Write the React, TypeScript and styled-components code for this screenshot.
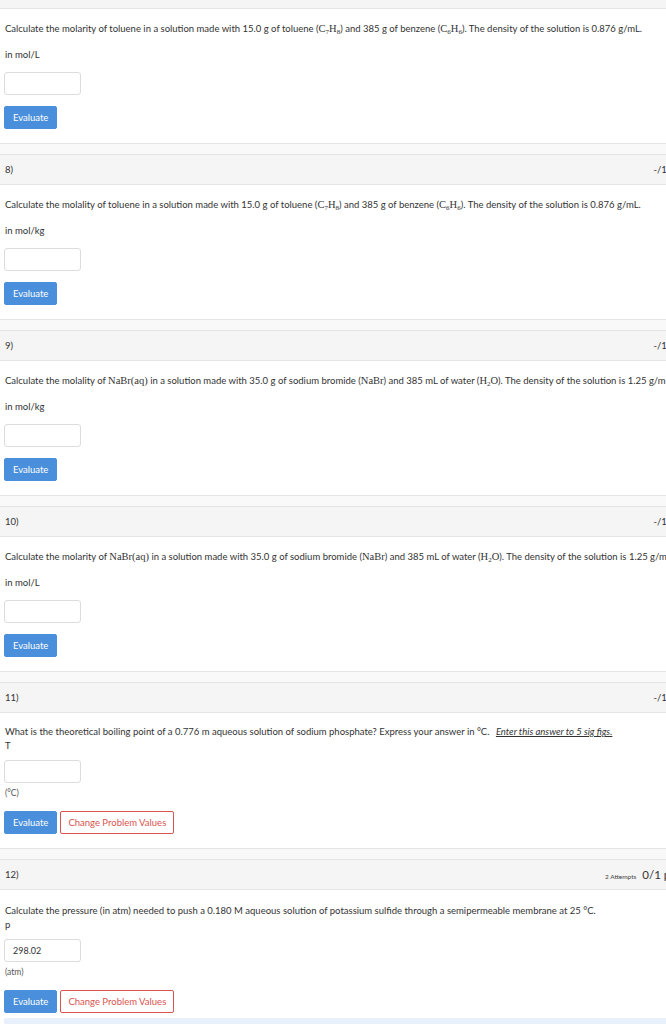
import React from "react";
import styled, { createGlobalStyle } from "styled-components";

const GlobalStyle = createGlobalStyle`
  html, body {
    margin: 0;
    padding: 0;
    background: #ffffff;
    overflow-x: hidden;
  }
  body {
    font-family: Lato, "Open Sans", "Liberation Sans", sans-serif;
    color: #333333;
  }
`;

const Page = styled.div`
  width: 700px;
  background: #f9f9f9;
  display: flex;
  flex-direction: column;
  gap: 10px;
`;

const Card = styled.section<{ $first?: boolean }>`
  background: #ffffff;
  border-top: ${(p) => (p.$first ? "none" : "1px solid #e4e4e4")};
  border-bottom: 1px solid #e4e4e4;
`;

const Stub = styled.div`
  height: 8px;
  background: #f5f5f5;
  border-bottom: 1px solid #e4e4e4;
`;

const Header = styled.header`
  height: 30px;
  box-sizing: border-box;
  background: #f5f5f5;
  border-bottom: 1px solid #e4e4e4;
  display: flex;
  align-items: center;
  justify-content: space-between;
  padding: 0 5px;
  font-size: 9.5px;
  color: #333;
`;

const Points = styled.div`
  display: flex;
  align-items: baseline;
  gap: 6px;
  white-space: nowrap;
`;

const Attempts = styled.span`
  font-size: 6.5px;
  color: #444;
`;

const Score = styled.span`
  font-size: 11.5px;
  color: #333;
`;

const Body = styled.div<{ $top?: number }>`
  padding: ${(p) => p.$top ?? 14}px 4px 14px;
  display: flex;
  flex-direction: column;
  align-items: flex-start;
`;

const Prompt = styled.p<{ $tight?: boolean }>`
  margin: 0 0 ${(p) => (p.$tight ? "2px" : "14px")};
  font-size: 9.5px;
  line-height: 12px;
  white-space: nowrap;
  padding-left: 1px;
`;

const Label = styled.div<{ $tight?: boolean }>`
  font-size: 9.5px;
  line-height: 12px;
  padding-left: 1px;
  margin-bottom: ${(p) => (p.$tight ? "8px" : "11px")};
`;

const Input = styled.div`
  width: 77px;
  height: 23px;
  box-sizing: border-box;
  border: 1px solid #dcdcdc;
  border-radius: 3px;
  background: #fff;
  font-size: 9px;
  display: flex;
  align-items: center;
  padding: 0 8px;
  color: #333;
`;

const Unit = styled.div`
  font-size: 8.5px;
  line-height: 12px;
  color: #555;
  margin-top: 4px;
  padding-left: 1px;
`;

const Buttons = styled.div<{ $gap?: number }>`
  display: flex;
  gap: 3px;
  margin-top: ${(p) => p.$gap ?? 11}px;
`;

const EvalButton = styled.button`
  height: 23px;
  padding: 0 8px;
  border: 1px solid #4a8fdb;
  border-radius: 2px;
  background: #4a8fdb;
  color: #ffffff;
  font-family: inherit;
  font-size: 9.5px;
`;

const ChangeButton = styled.button`
  height: 23px;
  padding: 0 7px;
  border: 1px solid #d9534f;
  border-radius: 2px;
  background: #ffffff;
  color: #d9534f;
  font-family: inherit;
  font-size: 9.5px;
`;

const Alert = styled.div`
  height: 12px;
  margin-top: 5px;
  align-self: stretch;
  background: #e8f1fb;
  border-radius: 2px;
`;

const Chem = styled.span`
  font-family: "Liberation Serif", "DejaVu Serif", serif;
  font-size: 10.5px;
  sub {
    font-size: 7px;
    vertical-align: -2px;
    line-height: 0;
  }
`;

const Hint = styled.span`
  font-style: italic;
  text-decoration: underline;
  margin-left: 4px;
`;

const C7H8 = () => (
  <Chem>
    C<sub>7</sub>H<sub>8</sub>
  </Chem>
);
const C6H6 = () => (
  <Chem>
    C<sub>6</sub>H<sub>6</sub>
  </Chem>
);
const NaBrAq = () => <Chem>NaBr(aq)</Chem>;
const NaBr = () => <Chem>NaBr</Chem>;
const H2O = () => (
  <Chem>
    H<sub>2</sub>O
  </Chem>
);

type Simple = {
  n: number;
  prompt: React.ReactNode;
  label: string;
  stub?: boolean;
};

const simple: Simple[] = [
  {
    n: 7,
    stub: true,
    prompt: (
      <>
        Calculate the molarity of toluene in a solution made with 15.0 g of toluene (<C7H8 />) and 385 g of benzene (
        <C6H6 />
        ). The density of the solution is 0.876 g/mL.
      </>
    ),
    label: "in mol/L",
  },
  {
    n: 8,
    prompt: (
      <>
        Calculate the molality of toluene in a solution made with 15.0 g of toluene (<C7H8 />) and 385 g of benzene (
        <C6H6 />
        ). The density of the solution is 0.876 g/mL.
      </>
    ),
    label: "in mol/kg",
  },
  {
    n: 9,
    prompt: (
      <>
        Calculate the molality of <NaBrAq /> in a solution made with 35.0 g of sodium bromide (<NaBr />) and 385 mL of
        water (<H2O />). The density of the solution is 1.25 g/mL.
      </>
    ),
    label: "in mol/kg",
  },
  {
    n: 10,
    prompt: (
      <>
        Calculate the molarity of <NaBrAq /> in a solution made with 35.0 g of sodium bromide (<NaBr />) and 385 mL of
        water (<H2O />). The density of the solution is 1.25 g/mL.
      </>
    ),
    label: "in mol/L",
  },
];

export default function App() {
  return (
    <>
      <GlobalStyle />
      <Page>
        {simple.map((q) => (
          <Card key={q.n} $first={q.stub}>
            {q.stub ? (
              <Stub />
            ) : (
              <Header>
                <span>{q.n})</span>
                <Points>-/1 points</Points>
              </Header>
            )}
            <Body>
              <Prompt>{q.prompt}</Prompt>
              <Label>{q.label}</Label>
              <Input />
              <Buttons>
                <EvalButton>Evaluate</EvalButton>
              </Buttons>
            </Body>
          </Card>
        ))}

        <Card>
          <Header>
            <span>11)</span>
            <Points>-/1 points</Points>
          </Header>
          <Body $top={13}>
            <Prompt $tight>
              What is the theoretical boiling point of a 0.776 m aqueous solution of sodium phosphate? Express your
              answer in °C. <Hint>Enter this answer to 5 sig figs.</Hint>
            </Prompt>
            <Label $tight>T</Label>
            <Input />
            <Unit>(°C)</Unit>
            <Buttons $gap={12}>
              <EvalButton>Evaluate</EvalButton>
              <ChangeButton>Change Problem Values</ChangeButton>
            </Buttons>
          </Body>
        </Card>

        <Card>
          <Header>
            <span>12)</span>
            <Points>
              <Attempts>2 Attempts</Attempts>
              <Score>0/1 points</Score>
            </Points>
          </Header>
          <Body $top={15}>
            <Prompt $tight>
              Calculate the pressure (in atm) needed to push a 0.180 M aqueous solution of potassium sulfide through a
              semipermeable membrane at 25 °C.
            </Prompt>
            <Label $tight>p</Label>
            <Input>298.02</Input>
            <Unit>(atm)</Unit>
            <Buttons $gap={12}>
              <EvalButton>Evaluate</EvalButton>
              <ChangeButton>Change Problem Values</ChangeButton>
            </Buttons>
            <Alert />
          </Body>
        </Card>
      </Page>
    </>
  );
}
